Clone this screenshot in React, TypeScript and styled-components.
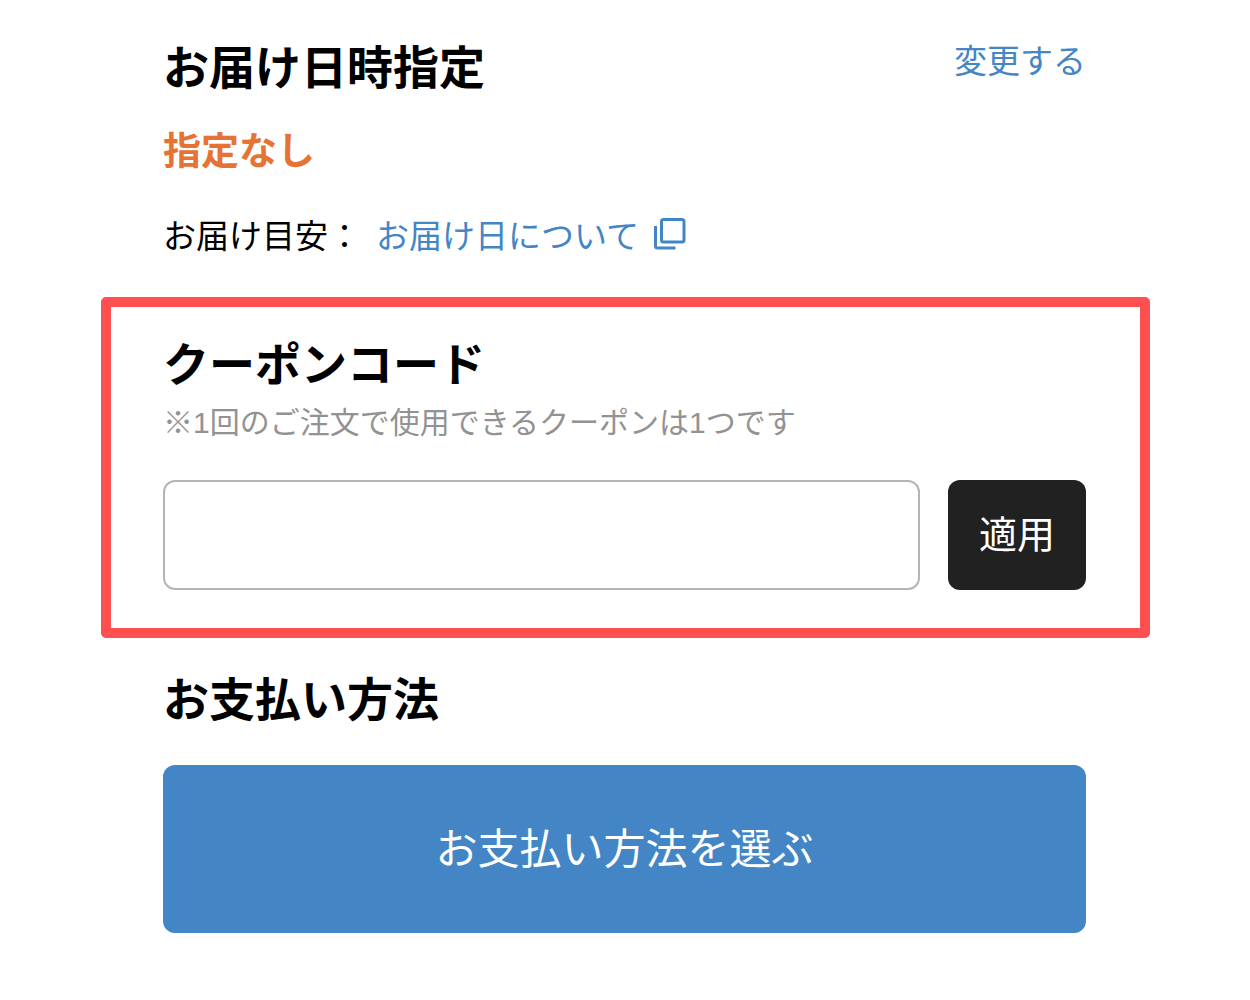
import React from "react";
import styled, { createGlobalStyle } from "styled-components";

const GlobalStyle = createGlobalStyle`
  * { box-sizing: border-box; }
  body {
    margin: 0;
    background: #fff;
    color: #000;
    font-family: "Noto Sans CJK JP", sans-serif;
  }
  h2, p { margin: 0; }
  button, input { font-family: inherit; }
`;

const Page = styled.main`
  padding: 36px 100px 40px 101px;
`;

const Section = styled.section`
  padding: 0 64px 0 62px;
`;

const DeliverySection = styled(Section)`
  padding-bottom: 40px;
`;

const CouponSection = styled.section`
  padding: 26px 54px 38px 52px;
  border: 10px solid #ff4f50;
  border-radius: 5px;
`;

const PaymentSection = styled(Section)`
  padding-top: 30px;
`;

const TitleRow = styled.div`
  display: flex;
  justify-content: space-between;
  align-items: flex-start;
`;

const Title = styled.h2`
  font-size: 46px;
  line-height: 56px;
  font-weight: 700;
`;

const Link = styled.a`
  display: inline-flex;
  align-items: center;
  gap: 14px;
  color: #4486c5;
  text-decoration: none;
  font-size: 33px;
  line-height: 46px;
`;

const Status = styled.p`
  margin-top: 32px;
  color: #e67334;
  font-size: 38px;
  line-height: 48px;
  font-weight: 700;
`;

const Estimate = styled.p`
  display: flex;
  align-items: center;
  gap: 15px;
  margin-top: 39px;
  font-size: 33px;
  line-height: 46px;
`;

const Note = styled.p`
  margin-top: 16px;
  color: #929292;
  font-family: "Liberation Sans", "Noto Sans CJK JP", sans-serif;
  font-size: 30px;
  line-height: 36px;
`;

const CouponForm = styled.form`
  display: flex;
  gap: 28px;
  margin-top: 39px;
`;

const CouponInput = styled.input`
  flex: 1;
  min-width: 0;
  height: 110px;
  padding: 0 24px;
  border: 2px solid #b5b5b5;
  border-radius: 12px;
  background: #fff;
  font-size: 38px;
`;

const ApplyButton = styled.button`
  width: 138px;
  height: 110px;
  padding: 0 0 8px;
  border: 0;
  border-radius: 12px;
  background: #212121;
  color: #fff;
  font-size: 38px;
`;

const PaymentButton = styled.button`
  display: block;
  width: 100%;
  height: 168px;
  margin-top: 41px;
  padding: 0 0 8px;
  border: 0;
  border-radius: 12px;
  background: #4486c5;
  color: #fff;
  font-size: 42px;
`;

function WindowIcon() {
  return (
    <svg width="34" height="34" viewBox="0 0 34 34" fill="none" stroke="currentColor" strokeWidth="3" aria-hidden="true">
      <rect x="8.5" y="2.5" width="22.5" height="22.5" rx="2" />
      <path d="M2.5 9v20a2 2 0 0 0 2 2h18" />
    </svg>
  );
}

export default function App() {
  return (
    <>
      <GlobalStyle />
      <Page>
        <DeliverySection>
          <TitleRow>
            <Title>お届け日時指定</Title>
            <Link href="#change">変更する</Link>
          </TitleRow>
          <Status>指定なし</Status>
          <Estimate>
            お届け目安：
            <Link href="#delivery">
              お届け日について
              <WindowIcon />
            </Link>
          </Estimate>
        </DeliverySection>
        <CouponSection>
          <Title id="coupon-title">クーポンコード</Title>
          <Note id="coupon-note">※1回のご注文で使用できるクーポンは1つです</Note>
          <CouponForm onSubmit={(e) => e.preventDefault()}>
            <CouponInput type="text" name="coupon" aria-labelledby="coupon-title" aria-describedby="coupon-note" />
            <ApplyButton type="submit">適用</ApplyButton>
          </CouponForm>
        </CouponSection>
        <PaymentSection>
          <Title>お支払い方法</Title>
          <PaymentButton type="button">お支払い方法を選ぶ</PaymentButton>
        </PaymentSection>
      </Page>
    </>
  );
}
